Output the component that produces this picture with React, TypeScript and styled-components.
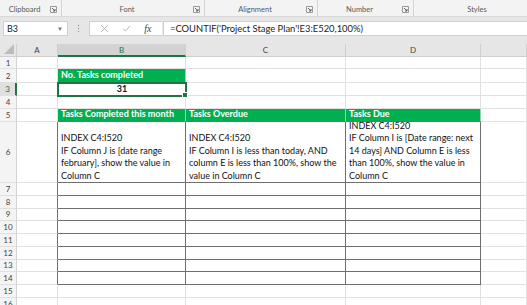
import * as React from "react";
import styled, { createGlobalStyle, css } from "styled-components";

const GlobalStyle = createGlobalStyle`
  html, body {
    margin: 0;
    padding: 0;
    width: 527px;
    height: 305px;
    overflow: hidden;
    background: #ffffff;
    font-family: Lato, "Open Sans", sans-serif;
  }
  * {
    box-sizing: border-box;
  }
`;

const GRID_LINE = "#e1e1e1";
const DARK_LINE = "#6f6f6f";
const GREEN = "#00b050";
const EXCEL_GREEN = "#217346";

const Window = styled.div`
  display: flex;
  flex-direction: column;
  width: 527px;
  height: 305px;
  overflow: hidden;
`;

/* ---------- ribbon ---------- */

const Ribbon = styled.div`
  display: flex;
  height: 17px;
  background: #f3f3f3;
  border-bottom: 1px solid #dadada;
  flex-shrink: 0;
`;

const RibbonGroup = styled.div<{ $width: number; $last?: boolean }>`
  display: flex;
  align-items: flex-end;
  width: ${(p) => p.$width}px;
  flex-shrink: 0;
  padding-bottom: 2px;
  border-right: ${(p) => (p.$last ? "none" : "1px solid #d4d4d4")};
`;

const GroupLabel = styled.span`
  flex: 1;
  text-align: center;
  font-size: 7.5px;
  line-height: 9px;
  color: #5a5a5a;
`;

const Launcher = styled.svg`
  width: 7px;
  height: 7px;
  margin: 0 4px 1px 1px;
  flex-shrink: 0;
`;

const LauncherIcon = () => (
  <Launcher viewBox="0 0 7 7">
    <path d="M0.5 6.5V0.5H6.5V6.5H0.5" fill="none" stroke="#9a9a9a" strokeWidth="1" />
    <path d="M2 2L5 5M5 3V5H3" fill="none" stroke="#555" strokeWidth="0.9" />
  </Launcher>
);

/* ---------- formula bar ---------- */

const FormulaStrip = styled.div`
  display: flex;
  align-items: center;
  height: 27px;
  padding: 0 0 5px 3px;
  background: #e6e6e6;
  flex-shrink: 0;
`;

const NameBox = styled.div`
  display: flex;
  align-items: center;
  justify-content: space-between;
  width: 65px;
  height: 15px;
  padding: 0 4px 0 3px;
  background: #ffffff;
  border: 1px solid #d0d0d0;
  font-size: 9px;
  color: #222;
`;

const Caret = styled.span`
  font-size: 6px;
  color: #777;
`;

const Grip = styled.svg`
  width: 21px;
  height: 9px;
`;

const ButtonBox = styled.div`
  display: flex;
  align-items: center;
  justify-content: space-around;
  width: 73px;
  height: 15px;
  padding: 0 4px;
  background: #ffffff;
  border: 1px solid #d0d0d0;
  border-right: none;
`;

const BarIcon = styled.svg`
  width: 9px;
  height: 9px;
`;

const FxLabel = styled.span`
  font-family: "Liberation Serif", serif;
  font-style: italic;
  font-size: 10px;
  color: #444;
`;

const FormulaInput = styled.div`
  flex: 1;
  height: 15px;
  display: flex;
  align-items: center;
  padding-left: 6px;
  margin-left: 1px;
  background: #ffffff;
  border: 1px solid #d0d0d0;
  border-right: none;
  font-size: 9.4px;
  color: #222;
  white-space: nowrap;
`;

/* ---------- sheet ---------- */

const Sheet = styled.div<{ $rows: string }>`
  display: grid;
  grid-template-columns: 17px 41px 128px 160px 135px 1fr;
  grid-template-rows: ${(p) => p.$rows};
  flex-shrink: 0;
`;

const Corner = styled.div`
  position: relative;
  background: #e6e6e6;
  border-right: 1px solid #cfcfcf;
  border-bottom: 1px solid #cfcfcf;
`;

const CornerTriangle = styled.svg`
  position: absolute;
  right: 2px;
  bottom: 2px;
  width: 10px;
  height: 10px;
`;

const ColHeader = styled.div<{ $active?: boolean }>`
  display: flex;
  align-items: center;
  justify-content: center;
  font-size: 8px;
  background: ${(p) => (p.$active ? "#d3d3d3" : "#e6e6e6")};
  color: ${(p) => (p.$active ? EXCEL_GREEN : "#444")};
  border-right: 1px solid #cfcfcf;
  border-bottom: ${(p) => (p.$active ? `2px solid ${EXCEL_GREEN}` : "1px solid #cfcfcf")};
`;

const RowHeader = styled.div<{ $active?: boolean }>`
  display: flex;
  align-items: center;
  justify-content: center;
  font-size: 8px;
  background: ${(p) => (p.$active ? "#e0e0e0" : "#f4f4f4")};
  color: ${(p) => (p.$active ? EXCEL_GREEN : "#444")};
  border-bottom: 1px solid #e0e0e0;
  border-right: ${(p) => (p.$active ? `2px solid ${EXCEL_GREEN}` : "1px solid #d4d4d4")};
`;

type Kind = "plain" | "green" | "boxed" | "active" | "edge";

const Cell = styled.div<{ $kind: Kind }>`
  position: relative;
  display: flex;
  flex-direction: column;
  justify-content: flex-end;
  padding: 0 2px 0 3px;
  font-size: 9px;
  line-height: 12.4px;
  color: #111;
  white-space: pre-line;
  background: #ffffff;
  border-right: 1px solid ${GRID_LINE};
  border-bottom: 1px solid ${GRID_LINE};

  ${(p) =>
    p.$kind === "green" &&
    css`
      background: ${GREEN};
      color: #ffffff;
      font-weight: 700;
      white-space: nowrap;
      border-right-color: #8fd6ab;
      border-bottom-color: ${GREEN};
      padding-bottom: 0.5px;
    `}

  ${(p) =>
    p.$kind === "boxed" &&
    css`
      border-right-color: ${DARK_LINE};
      border-bottom-color: ${DARK_LINE};
    `}

  ${(p) =>
    p.$kind === "edge" &&
    css`
      border-right-color: ${DARK_LINE};
    `}

  ${(p) =>
    p.$kind === "active" &&
    css`
      align-items: center;
      justify-content: center;
      font-weight: 700;
      outline: 2px solid ${EXCEL_GREEN};
      outline-offset: -1px;
      z-index: 1;
      &::after {
        content: "";
        position: absolute;
        right: -3px;
        bottom: -3px;
        width: 4px;
        height: 4px;
        background: ${EXCEL_GREEN};
        border: 1px solid #ffffff;
      }
    `}
`;

const GreenBottom = styled(Cell)`
  border-bottom-color: ${DARK_LINE};
`;

type RowSpec = {
  n: number;
  h: number;
  cells?: Partial<Record<"B" | "C" | "D", { text: string; kind: Kind }>>;
};

const boxedRow = (n: number): RowSpec => ({
  n,
  h: 12.75,
  cells: {
    B: { text: "", kind: "boxed" },
    C: { text: "", kind: "boxed" },
    D: { text: "", kind: "boxed" },
  },
});

const rows: RowSpec[] = [
  { n: 1, h: 12 },
  { n: 2, h: 14, cells: { B: { text: "No. Tasks completed", kind: "green" } } },
  { n: 3, h: 13, cells: { B: { text: "31", kind: "active" } } },
  { n: 4, h: 13 },
  {
    n: 5,
    h: 13,
    cells: {
      B: { text: "Tasks Completed this month", kind: "green" },
      C: { text: "Tasks Overdue", kind: "green" },
      D: { text: "Tasks Due", kind: "green" },
    },
  },
  {
    n: 6,
    h: 61,
    cells: {
      B: {
        text: "INDEX C4:I520\nIF Column J is [date range\nfebruary], show the value in\nColumn C",
        kind: "boxed",
      },
      C: {
        text: "INDEX C4:I520\nIF Column I is less than today, AND\ncolumn E is less than 100%, show the\nvalue in Column C",
        kind: "boxed",
      },
      D: {
        text: "INDEX C4:I520\nIF Column I is [Date range: next\n14 days] AND Column E is less\nthan 100%, show the value in\nColumn C",
        kind: "boxed",
      },
    },
  },
  ...[7, 8, 9, 10, 11, 12, 13, 14].map(boxedRow),
  { n: 15, h: 13 },
  { n: 16, h: 13 },
];

const ribbonGroups = [
  { label: "Clipboard", width: 62, launcher: true },
  { label: "Font", width: 143, launcher: true },
  { label: "Alignment", width: 113, launcher: true },
  { label: "Number", width: 96, launcher: true },
  { label: "Styles", width: 126, launcher: false },
];

// column E is wider than what the window shows, so its letter lies off-screen
const columns = ["A", "B", "C", "D", ""];

export default function App() {
  const template = ["13px", ...rows.map((r) => `${r.h}px`)].join(" ");

  return (
    <Window>
      <GlobalStyle />
      <Ribbon>
        {ribbonGroups.map((g, i) => (
          <RibbonGroup key={g.label} $width={g.width} $last={i === ribbonGroups.length - 1}>
            <GroupLabel>{g.label}</GroupLabel>
            {g.launcher ? <LauncherIcon /> : null}
          </RibbonGroup>
        ))}
      </Ribbon>

      <FormulaStrip>
        <NameBox>
          B3
          <Caret>▼</Caret>
        </NameBox>
        <Grip viewBox="0 0 21 9">
          <circle cx="10.5" cy="1.5" r="0.7" fill="#9a9a9a" />
          <circle cx="10.5" cy="4.5" r="0.7" fill="#9a9a9a" />
          <circle cx="10.5" cy="7.5" r="0.7" fill="#9a9a9a" />
        </Grip>
        <ButtonBox>
          <BarIcon viewBox="0 0 9 9">
            <path d="M1 1L8 8M8 1L1 8" stroke="#b0b0b0" strokeWidth="0.9" />
          </BarIcon>
          <BarIcon viewBox="0 0 9 9">
            <path d="M1 4.8L3.4 7.2L8 1.8" fill="none" stroke="#b0b0b0" strokeWidth="0.9" />
          </BarIcon>
          <FxLabel>fx</FxLabel>
        </ButtonBox>
        <FormulaInput>=COUNTIF('Project Stage Plan'!E3:E520,100%)</FormulaInput>
      </FormulaStrip>

      <Sheet $rows={template}>
        <Corner>
          <CornerTriangle viewBox="0 0 10 10">
            <path d="M10 0V10H0Z" fill="#bdbdbd" />
          </CornerTriangle>
        </Corner>
        {columns.map((c, i) => (
          <ColHeader key={i} $active={c === "B"}>
            {c}
          </ColHeader>
        ))}

        {rows.map((r) => {
          const boxedRowA = r.n >= 6 && r.n <= 14;
          return (
            <React.Fragment key={r.n}>
              <RowHeader $active={r.n === 3}>{r.n}</RowHeader>
              <Cell $kind={boxedRowA ? "edge" : "plain"} />
              {(["B", "C", "D"] as const).map((col) => {
                const spec = r.cells?.[col];
                if (!spec) return <Cell key={col} $kind="plain" />;
                if (r.n === 5)
                  return (
                    <GreenBottom key={col} $kind="green">
                      {spec.text}
                    </GreenBottom>
                  );
                return (
                  <Cell key={col} $kind={spec.kind}>
                    {spec.text}
                  </Cell>
                );
              })}
              <Cell $kind="plain" />
            </React.Fragment>
          );
        })}
      </Sheet>
    </Window>
  );
}
